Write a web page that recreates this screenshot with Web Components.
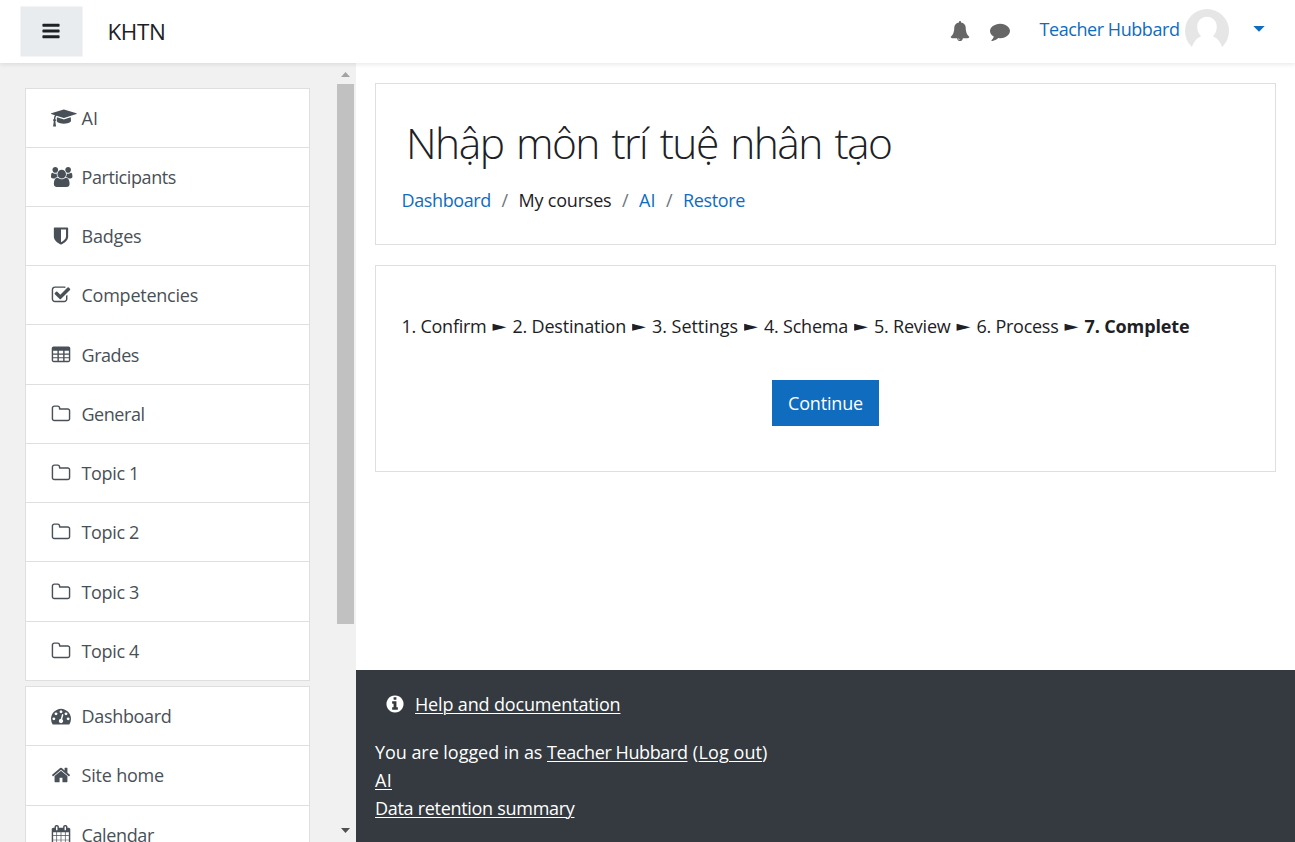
<!DOCTYPE html>
<html lang="vi">
<head>
<meta charset="utf-8">
<title>KHTN</title>
<style>
html,body{margin:0;height:100%;overflow:hidden}
body{font:370 18px/28px "Open Sans","Noto Sans",sans-serif;color:#1d2125;background:#fff}
</style>
</head>
<body>
<course-page></course-page>
<script>
const ICONS={
bars:[1792,'M1664 1344v128q0 26-19 45t-45 19h-1408q-26 0-45-19t-19-45v-128q0-26 19-45t45-19h1408q26 0 45 19t19 45zm0-512v128q0 26-19 45t-45 19h-1408q-26 0-45-19t-19-45v-128q0-26 19-45t45-19h1408q26 0 45 19t19 45zm0-512v128q0 26-19 45t-45 19h-1408q-26 0-45-19t-19-45v-128q0-26 19-45t45-19h1408q26 0 45 19t19 45z'],
bell:[1792,'M912 1696q0-16-16-16-59 0-101.5-42.5t-42.5-101.5q0-16-16-16t-16 16q0 73 51.5 124.5t124.5 51.5q16 0 16-16zm816-288q0 52-38 90t-90 38h-448q0 106-75 181t-181 75-181-75-75-181h-448q-52 0-90-38t-38-90q50-42 91-88t85-119.5 74.5-158.5 50-206 19.5-260q0-152 117-282.5t307-158.5q-8-19-8-39 0-40 28-68t68-28 68 28 28 68q0 20-8 39 190 28 307 158.5t117 282.5q0 139 19.5 260t50 206 74.5 158.5 85 119.5 91 88z'],
comment:[1792,'M1792 896q0 174-120 321.5t-326 233-450 85.5q-70 0-145-8-198 175-460 242-49 14-114 22-17 2-30.5-9t-17.5-29v-1q-3-4-.5-12t2-10 4.5-9.5l6-9 7-8.5 8-9q7-8 31-34.5t34.5-38 31-39.5 32.5-51 27-59 26-76q-157-89-247.5-220t-90.5-281q0-130 71-248.5t191-204.5 286-136.5 348-50.5q244 0 450 85.5t326 233 120 321.5z'],
home:[1792,'M1472 992v480q0 26-19 45t-45 19h-384v-384h-256v384h-384q-26 0-45-19t-19-45v-480q0-1 .5-3t.5-3l575-474 575 474q1 2 1 6zm223-69l-62 74q-8 9-21 11h-3q-13 0-21-7l-692-577-692 577q-12 8-24 7-13-2-21-11l-62-74q-8-10-7-23.5t11-21.5l719-599q32-26 76-26t76 26l244 204v-195q0-14 9-23t23-9h192q14 0 23 9t9 23v408l219 182q10 8 11 21.5t-7 23.5z'],
folder:[1792,'M1600 1312v-704q0-40-28-68t-68-28h-704q-40 0-68-28t-28-68v-64q0-40-28-68t-68-28h-320q-40 0-68 28t-28 68v960q0 40 28 68t68 28h1216q40 0 68-28t28-68zm128-704v704q0 92-66 158t-158 66h-1216q-92 0-158-66t-66-158v-960q0-92 66-158t158-66h320q92 0 158 66t66 158v32h672q92 0 158 66t66 158z'],
table:[1792,'M224 128h1344a160 160 0 0 1 160 160v1088a160 160 0 0 1-160 160h-1344a160 160 0 0 1-160-160v-1088a160 160 0 0 1 160-160zM192 512v256h384v-256zM704 512v256h384v-256zM1216 512v256h384v-256zM192 864v224h384v-224zM704 864v224h384v-224zM1216 864v224h384v-224zM192 1184v224h384v-224zM704 1184v224h384v-224zM1216 1184v224h384v-224z'],
cap:[2304,'M1774 836l18 316q4 69-82 128t-235 93.5-323 34.5-323-34.5-235-93.5-82-128l18-316 574 181q22 7 48 7t48-7zm530-324q0 23-22 31l-1120 352q-4 1-10 1t-10-1l-652-206q-43 34-71 111.5t-34 178.5q63 36 63 109 0 69-58 107l58 433q2 14-8 25-9 11-24 11h-192q-15 0-24-11-10-11-8-25l58-433q-58-38-58-107 0-73 65-111 11-207 98-330l-333-104q-22-8-22-31t22-31l1120-352q4-1 10-1t10 1l1120 352q22 8 22 31z'],
users:[1920,'M593 896q-162 5-265 128h-134q-82 0-138-40.5t-56-118.5q0-353 124-353 6 0 43.5 21t97.5 42.5 119 21.5q67 0 133-23-5 37-5 66 0 139 81 256zm1071 637q0 120-73 189.5t-194 69.5h-874q-121 0-194-69.5t-73-189.5q0-53 3.5-103.5t14-109 26.5-108.5 43-97.5 62-81 85.5-53.5 111.5-20q10 0 43 21.5t73 48 107 48 135 21.5 135-21.5 107-48 73-48 43-21.5q61 0 111.5 20t85.5 53.5 62 81 43 97.5 26.5 108.5 14 109 3.5 103.5zm-1024-1277q0 106-75 181t-181 75-181-75-75-181 75-181 181-75 181 75 75 181zm704 384q0 159-112.5 271.5t-271.5 112.5-271.5-112.5-112.5-271.5 112.5-271.5 271.5-112.5 271.5 112.5 112.5 271.5zm576 225q0 78-56 118.5t-138 40.5h-134q-103-123-265-128 81-117 81-256 0-29-5-66 66 23 133 23 59 0 119-21.5t97.5-42.5 43.5-21q124 0 124 353zm-128-609q0 106-75 181t-181 75-181-75-75-181 75-181 181-75 181 75 75 181z'],
shield:[1792,'M1344 960v-640h-448v1137q119-63 213-137 235-184 235-360zm192-768v768q0 86-33.5 170.5t-83 150-118 127.5-126.5 103-121 77.5-89.5 49.5-42.5 20q-12 6-26 6t-26-6q-16-7-42.5-20t-89.5-49.5-121-77.5-126.5-103-118-127.5-83-150-33.5-170.5v-768q0-26 19-45t45-19h1152q26 0 45 19t19 45z'],
check:[1792,'M1472 930v318q0 119-84.5 203.5t-203.5 84.5h-832q-119 0-203.5-84.5t-84.5-203.5v-832q0-119 84.5-203.5t203.5-84.5h832q63 0 117 25 15 7 18 23 3 17-9 29l-49 49q-10 10-23 10-3 0-9-2-23-6-45-6h-832q-66 0-113 47t-47 113v832q0 66 47 113t113 47h832q66 0 113-47t47-113v-254q0-13 9-22l64-64q10-10 23-10 6 0 12 3 20 8 20 29zm231-489l-814 814q-24 24-57 24t-57-24l-430-430q-24-24-24-57t24-57l110-110q24-24 57-24t57 24l263 263 647-647q24-24 57-24t57 24l110 110q24 24 24 57t-24 57z'],
gauge:[1792,'M384 1152q0-53-37.5-90.5t-90.5-37.5-90.5 37.5-37.5 90.5 37.5 90.5 90.5 37.5 90.5-37.5 37.5-90.5zm192-448q0-53-37.5-90.5t-90.5-37.5-90.5 37.5-37.5 90.5 37.5 90.5 90.5 37.5 90.5-37.5 37.5-90.5zm428 481l101-382q6-26-7.5-48.5t-38.5-29.5-48 6.5-30 39.5l-101 382q-60 5-107 43.5t-63 98.5q-20 77 20 146t117 89 146-20 89-117q16-60-6-117t-72-91zm660-33q0-53-37.5-90.5t-90.5-37.5-90.5 37.5-37.5 90.5 37.5 90.5 90.5 37.5 90.5-37.5 37.5-90.5zm-640-640q0-53-37.5-90.5t-90.5-37.5-90.5 37.5-37.5 90.5 37.5 90.5 90.5 37.5 90.5-37.5 37.5-90.5zm448 192q0-53-37.5-90.5t-90.5-37.5-90.5 37.5-37.5 90.5 37.5 90.5 90.5 37.5 90.5-37.5 37.5-90.5zm320 448q0 261-141 483-19 29-54 29h-1402q-35 0-54-29-141-221-141-483 0-182 71-348t191-286 286-191 348-71 348 71 286 191 191 286 71 348z'],
calendar:[1792,'M192 1664h288v-288h-288v288zm352 0h320v-288h-320v288zm-352-352h288v-320h-288v320zm352 0h320v-320h-320v320zm-352-384h288v-288h-288v288zm736 736h320v-288h-320v288zm-384-736h320v-288h-320v288zm768 736h288v-288h-288v288zm-384-352h320v-320h-320v320zm-352-864v-288q0-13-9.5-22.5t-22.5-9.5h-64q-13 0-22.5 9.5t-9.5 22.5v288q0 13 9.5 22.5t22.5 9.5h64q13 0 22.5-9.5t9.5-22.5zm736 864h288v-320h-288v320zm-384-384h320v-288h-320v288zm384 0h288v-288h-288v288zm32-480v-288q0-13-9.5-22.5t-22.5-9.5h-64q-13 0-22.5 9.5t-9.5 22.5v288q0 13 9.5 22.5t22.5 9.5h64q13 0 22.5-9.5t9.5-22.5zm384-64v1280q0 52-38 90t-90 38h-1408q-52 0-90-38t-38-90v-1280q0-52 38-90t90-38h128v-96q0-66 47-113t113-47h64q66 0 113 47t47 113v96h384v-96q0-66 47-113t113-47h64q66 0 113 47t47 113v96h128q52 0 90 38t38 90z'],
info:[1792,'M1152 1376v-160q0-14-9-23t-23-9h-96v-512q0-14-9-23t-23-9h-320q-14 0-23 9t-9 23v160q0 14 9 23t23 9h96v320h-96q-14 0-23 9t-9 23v160q0 14 9 23t23 9h448q14 0 23-9t9-23zm-128-896v-160q0-14-9-23t-23-9h-192q-14 0-23 9t-9 23v160q0 14 9 23t23 9h192q14 0 23-9t9-23zm640 416q0 209-103 385.5t-279.5 279.5-385.5 103-385.5-103-279.5-279.5-103-385.5 103-385.5 279.5-279.5 385.5-103 385.5 103 279.5 279.5 103 385.5z']
};

function define(name,html,ready){
  customElements.define(name,class extends HTMLElement{
    connectedCallback(){
      if(this.shadowRoot)return;
      const root=this.attachShadow({mode:'open'});
      root.innerHTML=typeof html==='function'?html(this):html;
      if(ready)ready.call(this,root);
    }
  });
}

/* Glyph from the icon table, in a fixed 20px cell. */
define('ui-icon',el=>{
  const [w,d]=ICONS[el.getAttribute('name')];
  return `<style>:host{display:block;width:20px;height:20px;flex:none}svg{display:block;height:20px;overflow:visible;fill:currentColor}</style><svg viewBox="0 0 ${w} 1792" width="${w/89.6}"><path fill-rule="evenodd" d="${d}"/></svg>`;
});

/* Single line of text whose tracking is adjusted to fill the width "w". */
define('ui-text','<style>:host{display:inline-block;white-space:pre;flex:none}span{display:inline-block}:host([u]) span{text-decoration:underline;text-decoration-thickness:1px;text-underline-offset:2px}</style><span><slot></slot></span>',function(root){
  const s=root.querySelector('span'),w=+this.getAttribute('w');
  const nat=s.getBoundingClientRect().width;
  s.style.letterSpacing=(w-nat)/this.textContent.length+'px';
  this.style.width=w+'px';
});

define('nav-item',el=>`<style>:host{display:flex;box-sizing:border-box;height:59.234375px;flex:none;align-items:center;gap:10.5px;padding-left:25px;border-top:1px solid #dfdfdf;background:#fff;color:#495057}</style><ui-icon name="${el.getAttribute('icon')}"></ui-icon><slot></slot>`);
define('nav-list','<style>:host{display:flex;flex-direction:column;border:solid #dfdfdf;border-width:0 1px 1px;width:283px;flex:none}</style><slot></slot>');

define('scroll-bar',`<style>:host{display:flex;flex-direction:column;align-items:center;width:17px;background:#f1f1f1;box-sizing:border-box;padding:9px 0 9px}
.thumb{width:17px;height:540px;background:#c1c1c1;margin-top:7px}
svg{display:block;flex:none}.down{margin-top:auto}</style>
<svg width="9" height="5"><path d="M0 5L4.5 0L9 5z" fill="#a3a3a3"/></svg><div class="thumb"></div><svg class="down" width="9" height="5"><path d="M0 0L4.5 5L9 0z" fill="#505050"/></svg>`);

define('nav-drawer',`<style>:host{display:flex;width:356px;box-sizing:border-box;padding-right:2px;background:#f1f1f1;flex:none;overflow:hidden}
.lists{flex:1;display:flex;flex-direction:column;gap:5.25px;padding:24.52px 0 0 25px;overflow:hidden;min-height:0}</style>
<div class="lists"><nav-list>
<nav-item icon="cap"><ui-text w="16.5">AI</ui-text></nav-item>
<nav-item icon="users"><ui-text w="94.5">Participants</ui-text></nav-item>
<nav-item icon="shield"><ui-text w="60">Badges</ui-text></nav-item>
<nav-item icon="check"><ui-text w="116.5">Competencies</ui-text></nav-item>
<nav-item icon="table"><ui-text w="57.5">Grades</ui-text></nav-item>
<nav-item icon="folder"><ui-text w="63">General</ui-text></nav-item>
<nav-item icon="folder"><ui-text w="57.5">Topic 1</ui-text></nav-item>
<nav-item icon="folder"><ui-text w="57.5">Topic 2</ui-text></nav-item>
<nav-item icon="folder"><ui-text w="57.5">Topic 3</ui-text></nav-item>
<nav-item icon="folder"><ui-text w="57.5">Topic 4</ui-text></nav-item>
</nav-list><nav-list>
<nav-item icon="gauge"><ui-text w="90">Dashboard</ui-text></nav-item>
<nav-item icon="home"><ui-text w="82.5">Site home</ui-text></nav-item>
<nav-item icon="calendar"><ui-text w="72.5">Calendar</ui-text></nav-item>
</nav-list></div><scroll-bar></scroll-bar>`);

define('user-avatar',`<style>:host{display:block;width:44px;height:44px;flex:none;margin-top:-2px}svg{display:block}</style>
<svg width="44" height="44" viewBox="0 0 44 44"><circle cx="22" cy="22" r="22" fill="#e6e6e6"/><path fill="#fff" d="M22 7.8c5.6 0 9.8 4.2 9.8 10 0 3.8-1.4 7.2-3.8 9.500 4.300 1.700 7.300 5.300 9 10.500V44H7v-6.200c1.700-5.200 4.700-8.800 9-10.500-2.400-2.300-3.800-5.700-3.800-9.500 0-5.800 4.200-10 9.800-10z"/></svg>`);

define('top-bar',`<style>:host{display:flex;height:63px;box-sizing:border-box;align-items:center;background:#fff;box-shadow:0 2px 4px rgba(0,0,0,.08);position:relative;z-index:1;padding:0 30px 0 21px;flex:none}
.menu{display:flex;width:61px;height:49px;align-items:center;justify-content:center;background:#e9ecef;box-shadow:0 0 0 .5px #e9ecef}
.menu ui-icon{margin:-1px 1px 0 0}
.brand{font-size:22.4px;line-height:30px;margin-left:25.5px}
.icons{display:flex;gap:20px;color:#666;margin:-1px 30px 0 auto}
.user{color:#0f6cbf;margin-right:5px;margin-top:-5px}
svg{margin:-5px 0 0 24.5px;display:block}</style>
<div class="menu"><ui-icon name="bars"></ui-icon></div>
<ui-text class="brand" w="58">KHTN</ui-text>
<div class="icons"><ui-icon name="bell"></ui-icon><ui-icon name="comment"></ui-icon></div>
<ui-text class="user" w="140">Teacher Hubbard</ui-text><user-avatar></user-avatar>
<svg width="12" height="6"><path d="M.3 0h11.4L6 5.7z" fill="#0f6cbf"/></svg>`);

define('content-card','<style>:host{display:block;box-sizing:border-box;border:1px solid #dfdfdf;background:#fff}</style><slot></slot>');

define('page-header',`<style>:host{display:block}
content-card{height:162px;padding:28px 25.5px 0}
h1{margin:0;font-size:42.5px;line-height:62px;font-weight:300;padding-left:4.5px;height:62px;word-spacing:3px}
.crumbs{display:flex;margin-top:12px;color:#0f6cbf}.sep{width:27.5px;text-align:center;color:#6c757d}.plain{color:#1d2125}</style>
<content-card><h1><ui-text w="485.5">Nhập môn trí tuệ nhân tạo</ui-text></h1>
<div class="crumbs"><ui-text w="89.5">Dashboard</ui-text><span class="sep">/</span><ui-text class="plain" w="93">My courses</ui-text><span class="sep">/</span><ui-text w="16.5">AI</ui-text><span class="sep">/</span><ui-text w="62">Restore</ui-text></div></content-card>`);

define('restore-steps',`<style>:host{display:flex}i{font:normal 18px/28px "DejaVu Sans",sans-serif;width:26px;text-align:center;flex:none;transform:scaleY(.8)}b{font-weight:700}</style>
<ui-text w="85">1. Confirm</ui-text><i>►</i><ui-text w="113.5">2. Destination</ui-text><i>►</i><ui-text w="86">3. Settings</ui-text><i>►</i><ui-text w="84">4. Schema</ui-text><i>►</i><ui-text w="76.5">5. Review</ui-text><i>►</i><ui-text w="82">6. Process</ui-text><i>►</i><b><ui-text w="105">7. Complete</ui-text></b>`);

define('primary-button','<style>:host{display:flex;width:107px;height:46px;align-items:center;justify-content:center;background:#0f6cbf;color:#fff}</style><slot></slot>');

define('page-footer',`<style>:host{display:block;height:172px;box-sizing:border-box;background:#343a40;color:#fff;padding:20px 0 0 19px;flex:none}
.help{display:flex;align-items:center;padding-left:10px;gap:10px;margin-bottom:20px}.row{display:flex}</style>
<div class="help"><ui-icon name="info"></ui-icon><ui-text u w="205.5">Help and documentation</ui-text></div>
<div class="row"><ui-text w="172">You are logged in as </ui-text><ui-text u w="140.5">Teacher Hubbard</ui-text><ui-text w="11"> (</ui-text><ui-text u w="63.5">Log out</ui-text><ui-text w="5.5">)</ui-text></div>
<div class="row"><ui-text u w="17">AI</ui-text></div>
<div class="row"><ui-text u w="199.5">Data retention summary</ui-text></div>`);

define('course-page',`<style>:host{display:flex;flex-direction:column;height:842px;width:1295px;overflow:hidden}
.body{display:flex;flex:1;min-height:0}
main{flex:1;display:flex;flex-direction:column;min-width:0}
.content{flex:1;display:flex;flex-direction:column;gap:20px;padding:20px 19px 0}
.restore{height:207px;padding:46px 25.5px 0;display:flex;flex-direction:column;align-items:flex-start}
primary-button{align-self:center;margin-top:40px}</style>
<top-bar></top-bar>
<div class="body"><nav-drawer></nav-drawer>
<main><div class="content"><page-header></page-header>
<content-card class="restore"><restore-steps></restore-steps><primary-button><ui-text w="75">Continue</ui-text></primary-button></content-card></div>
<page-footer></page-footer></main></div>`);
</script>
</body>
</html>
